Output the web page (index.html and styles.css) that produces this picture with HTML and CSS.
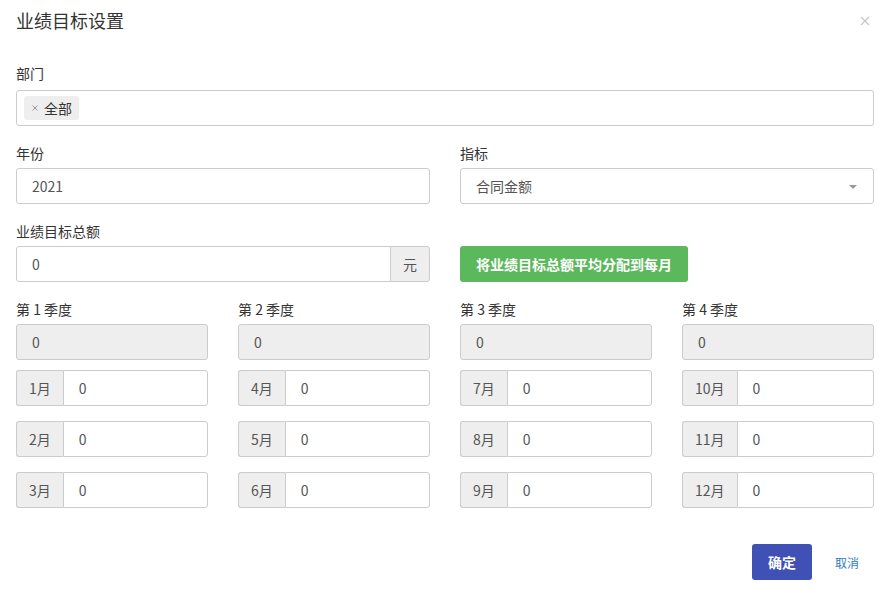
FILE: index.html
```html
<!DOCTYPE html>
<html lang="zh-CN">
<head>
    <meta charset="UTF-8">
    <meta name="viewport" content="width=device-width, initial-scale=1.0">
    <title>业绩目标设置</title>
    <link rel="stylesheet" href="styles.css">
</head>
<body>

    <div class="modal">
        <div class="modal-header">
            <h4 class="modal-title">业绩目标设置</h4>
            <button type="button" class="close">
                <svg width="10" height="10" viewBox="0 0 10 10">
                    <path d="M1 1 L9 9 M9 1 L1 9" stroke="#c9c9c9" stroke-width="1.4" fill="none"/>
                </svg>
            </button>
        </div>

        <div class="modal-body">
            <div class="form-group first">
                <label>部门</label>
                <div class="tag-input">
                    <span class="tag">
                        <svg class="tag-remove" width="6" height="6" viewBox="0 0 6 6">
                            <path d="M0.5 0.5 L5.5 5.5 M5.5 0.5 L0.5 5.5" stroke="#999" stroke-width="1" fill="none"/>
                        </svg>全部</span>
                </div>
            </div>

            <div class="row">
                <div class="form-group">
                    <label>年份</label>
                    <input type="text" class="form-control" value="2021">
                </div>
                <div class="form-group">
                    <label>指标</label>
                    <div class="form-control select">合同金额<span class="caret"></span></div>
                </div>
            </div>

            <div class="row">
                <div class="form-group">
                    <label>业绩目标总额</label>
                    <div class="input-group">
                        <input type="text" class="form-control" value="0">
                        <span class="addon addon-right">元</span>
                    </div>
                </div>
                <div class="form-group bottom">
                    <button type="button" class="btn btn-success">将业绩目标总额平均分配到每月</button>
                </div>
            </div>

            <div class="quarters">
                <div class="quarter">
                    <label>第 1 季度</label>
                    <input type="text" class="form-control" value="0" disabled>
                    <div class="input-group month"><span class="addon">1月</span><input type="text" class="form-control" value="0"></div>
                    <div class="input-group month"><span class="addon">2月</span><input type="text" class="form-control" value="0"></div>
                    <div class="input-group month"><span class="addon">3月</span><input type="text" class="form-control" value="0"></div>
                </div>
                <div class="quarter">
                    <label>第 2 季度</label>
                    <input type="text" class="form-control" value="0" disabled>
                    <div class="input-group month"><span class="addon">4月</span><input type="text" class="form-control" value="0"></div>
                    <div class="input-group month"><span class="addon">5月</span><input type="text" class="form-control" value="0"></div>
                    <div class="input-group month"><span class="addon">6月</span><input type="text" class="form-control" value="0"></div>
                </div>
                <div class="quarter">
                    <label>第 3 季度</label>
                    <input type="text" class="form-control" value="0" disabled>
                    <div class="input-group month"><span class="addon">7月</span><input type="text" class="form-control" value="0"></div>
                    <div class="input-group month"><span class="addon">8月</span><input type="text" class="form-control" value="0"></div>
                    <div class="input-group month"><span class="addon">9月</span><input type="text" class="form-control" value="0"></div>
                </div>
                <div class="quarter">
                    <label>第 4 季度</label>
                    <input type="text" class="form-control" value="0" disabled>
                    <div class="input-group month"><span class="addon">10月</span><input type="text" class="form-control" value="0"></div>
                    <div class="input-group month"><span class="addon">11月</span><input type="text" class="form-control" value="0"></div>
                    <div class="input-group month"><span class="addon">12月</span><input type="text" class="form-control" value="0"></div>
                </div>
            </div>
        </div>

        <div class="modal-footer">
            <button type="button" class="btn btn-primary">确定</button>
            <button type="button" class="btn btn-link">取消</button>
        </div>
    </div>

</body>
</html>
```

FILE: styles.css
```css
* {
    margin: 0;
    padding: 0;
    box-sizing: border-box;
}

body {
    font-family: "Noto Sans CJK SC", "Noto Sans", sans-serif;
    font-size: 14px;
    color: #333;
    background: #fff;
}

.modal {
    width: 891px;
    padding: 0 17px 0 16px;
}

/* Header */
.modal-header {
    display: flex;
    justify-content: space-between;
    align-items: center;
    padding-top: 9px;
}

.modal-title {
    font-size: 18px;
    font-weight: normal;
    line-height: 22px;
    color: #333;
}

.close {
    background: none;
    border: none;
    width: 10px;
    height: 10px;
    margin-right: 4px;
    margin-top: 2px;
    display: flex;
}

/* Body */
.modal-body {
    padding-top: 33px;
}

label {
    display: block;
    font-size: 14px;
    line-height: 18px;
    margin-bottom: 6px;
    color: #333;
}

.form-group {
    margin-bottom: 18px;
}

.form-group.first label {
    margin-bottom: 8px;
}

.row {
    display: grid;
    grid-template-columns: 1fr 1fr;
    gap: 30px;
}

.form-group.bottom {
    display: flex;
    align-items: flex-end;
}

.form-control {
    display: block;
    width: 100%;
    height: 36px;
    padding: 0 15px;
    font-family: inherit;
    font-size: 14px;
    color: #555;
    background: #fff;
    border: 1px solid #ccc;
    border-radius: 3px;
    outline: none;
}

.form-control:disabled {
    background: #eee;
    color: #555;
}

.select {
    position: relative;
    line-height: 34px;
}

.caret {
    position: absolute;
    right: 16px;
    top: 16px;
    border-top: 4px solid #999;
    border-left: 4px solid transparent;
    border-right: 4px solid transparent;
}

/* Tag input */
.tag-input {
    height: 36px;
    border: 1px solid #ccc;
    border-radius: 3px;
    padding: 5px 7px;
    display: flex;
    align-items: center;
}

.tag {
    display: inline-flex;
    align-items: center;
    height: 24px;
    padding: 0 7px 0 8px;
    background: #eee;
    border-radius: 3px;
    font-size: 14px;
    color: #333;
}

.tag-remove {
    margin-right: 6px;
}

/* Input groups */
.input-group {
    display: flex;
}

.input-group .form-control {
    flex: 1;
    min-width: 0;
}

.addon {
    display: flex;
    align-items: center;
    height: 36px;
    padding: 0 12px;
    background: #eee;
    border: 1px solid #ccc;
    color: #555;
    font-size: 14px;
    border-radius: 3px 0 0 3px;
    border-right: none;
    white-space: nowrap;
}

.addon-right {
    border-right: 1px solid #ccc;
    border-left: 1px solid #ccc;
    border-radius: 0 3px 3px 0;
    padding: 0 12px 0 12px;
}

.input-group .addon-right {
    margin-left: -1px;
}

.input-group:has(.addon-right) .form-control {
    border-radius: 3px 0 0 3px;
}

.month .form-control {
    border-radius: 0 3px 3px 0;
}

/* Quarters */
.quarters {
    display: grid;
    grid-template-columns: repeat(4, 1fr);
    gap: 30px;
}

.quarter > .form-control {
    margin-bottom: 10px;
}

.month {
    margin-bottom: 15px;
}

/* Buttons */
.btn {
    height: 36px;
    font-family: inherit;
    font-size: 14px;
    border: none;
    border-radius: 3px;
    cursor: pointer;
}

.btn-success {
    background: #5cb85c;
    color: #fff;
    font-weight: bold;
    padding: 0 16px;
    width: 228px;
}

.modal-footer {
    display: flex;
    justify-content: flex-end;
    align-items: center;
    margin-top: 21px;
}

.btn-primary {
    background: #3f51b5;
    color: #fff;
    font-weight: bold;
    width: 60px;
    margin-right: 8px;
}

.btn-link {
    background: none;
    color: #2f7bbf;
    font-size: 12px;
    padding: 0 15px;
}
```
